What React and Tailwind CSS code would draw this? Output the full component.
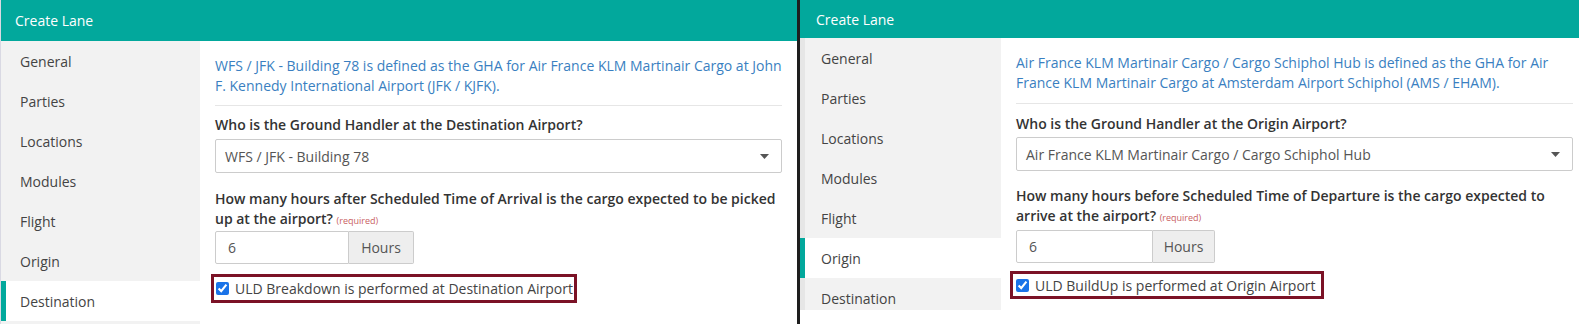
import React from "react";

const teal = "bg-[#02a89c]";

const navItems = ["General", "Parties", "Locations", "Modules", "Flight", "Origin", "Destination"];

const Caret = () => (
  <svg width="9" height="5" viewBox="0 0 9 5" className="shrink-0">
    <path d="M0 0 L9 0 L4.5 5 Z" fill="#555" />
  </svg>
);

const LeftPanel = () => (
  <div className="w-[797px] h-full flex flex-col border-l border-[#d9d9e3] shrink-0">
    <div className={`h-[41px] ${teal} flex items-center pl-[14px] text-white text-[14px]`}>Create Lane</div>
    <div className="flex flex-1">
      <div className="w-[199px] bg-[#f2f2f2] flex flex-col">
        {navItems.map((item) => (
          <div
            key={item}
            className={
              item === "Destination"
                ? "h-[40px] flex items-center pl-[14px] border-l-[5px] border-[#02a89c] bg-white text-[14px] text-[#444]"
                : "h-[40px] flex items-center pl-[19px] text-[14px] text-[#444]"
            }
          >
            {item}
          </div>
        ))}
      </div>
      <div className="flex-1 pt-[15px] pl-[15px] pr-[15px]">
        <p className="text-[14px] leading-[20px] text-[#3a7fc1]">
          WFS / JFK - Building 78 is defined as the GHA for Air France KLM Martinair Cargo at John F. Kennedy
          International Airport (JFK / KJFK).
        </p>
        <div className="mt-[9px] border-t border-[#e6e6e6]" />
        <div className="mt-[9px] text-[14px] leading-[20px] font-semibold text-[#333]">
          Who is the Ground Handler at the Destination Airport?
        </div>
        <div className="mt-[4px] h-[34px] border border-[#ccc] rounded-[2px] pl-[9px] pr-[12px] flex items-center justify-between text-[14px] text-[#555]">
          <span>WFS / JFK - Building 78</span>
          <Caret />
        </div>
        <div className="mt-[16px] text-[14px] leading-[20px] font-semibold text-[#333]">
          How many hours after Scheduled Time of Arrival is the cargo expected to be picked up at the airport?{" "}
          <span className="inline-block text-[9px] leading-[12px] font-normal text-[#c9625f]">(required)</span>
        </div>
        <div className="mt-[2px] flex h-[33px] text-[14px] text-[#555]">
          <div className="w-[134px] border border-[#ccc] rounded-l-[2px] pl-[12px] flex items-center">6</div>
          <div className="w-[65px] border border-l-0 border-[#ccc] rounded-r-[2px] bg-[#eee] flex items-center justify-center">
            Hours
          </div>
        </div>
        <label className="mt-[10px] ml-[-4px] inline-flex items-center h-[29px] border-[3px] border-[#7b1226] pl-[2px] pr-[1px] gap-[6px] text-[14px] text-[#444]">
          <input type="checkbox" checked readOnly className="w-[13px] h-[13px] accent-[#1a73e8]" />
          <span>ULD Breakdown is performed at Destination Airport</span>
        </label>
      </div>
    </div>
  </div>
);

const RightPanel = () => (
  <div className="flex-1 h-full flex flex-col border-l-[3px] border-[#1e1e1e]">
    <div className={`h-[38px] ${teal} flex items-center pl-[16px] text-white text-[14px]`}>Create Lane</div>
    <div className="flex flex-1 items-start">
      <div className="w-[201px] h-[272px] overflow-hidden bg-[#f2f2f2] flex flex-col">
        {navItems.map((item) => (
          <div
            key={item}
            className={
              item === "Origin"
                ? "h-[40px] shrink-0 flex items-center pl-[16px] border-l-[5px] border-[#02a89c] bg-white text-[14px] text-[#444]"
                : "h-[40px] shrink-0 flex items-center pl-[16px] border-l-[5px] border-[#e6e6e6] text-[14px] text-[#444]"
            }
          >
            {item}
          </div>
        ))}
      </div>
      <div className="flex-1 pt-[15px] pl-[15px] pr-[6px]">
        <p className="text-[14px] leading-[20px] text-[#3a7fc1] pr-[8px]">
          Air France KLM Martinair Cargo / Cargo Schiphol Hub is defined as the GHA for Air France KLM Martinair
          Cargo at Amsterdam Airport Schiphol (AMS / EHAM).
        </p>
        <div className="mt-[10px] border-t border-[#e6e6e6]" />
        <div className="mt-[10px] text-[14px] leading-[20px] font-semibold text-[#333]">
          Who is the Ground Handler at the Origin Airport?
        </div>
        <div className="mt-[3px] h-[34px] border border-[#ccc] rounded-[2px] pl-[9px] pr-[12px] flex items-center justify-between text-[14px] text-[#555]">
          <span>Air France KLM Martinair Cargo / Cargo Schiphol Hub</span>
          <Caret />
        </div>
        <div className="mt-[15px] pr-[8px] text-[14px] leading-[20px] font-semibold text-[#333]">
          How many hours before Scheduled Time of Departure is the cargo expected to arrive at the airport?{" "}
          <span className="inline-block text-[9px] leading-[12px] font-normal text-[#c9625f]">(required)</span>
        </div>
        <div className="mt-[4px] flex h-[33px] text-[14px] text-[#555]">
          <div className="w-[137px] border border-[#ccc] rounded-l-[2px] pl-[12px] flex items-center">6</div>
          <div className="w-[62px] border border-l-0 border-[#ccc] rounded-r-[2px] bg-[#eee] flex items-center justify-center">
            Hours
          </div>
        </div>
        <label className="mt-[8px] ml-[-6px] inline-flex items-center h-[28px] border-[3px] border-[#7b1226] pl-[3px] pr-[5px] gap-[6px] text-[14px] text-[#444]">
          <input type="checkbox" checked readOnly className="w-[13px] h-[13px] accent-[#1a73e8]" />
          <span>ULD BuildUp is performed at Origin Airport</span>
        </label>
      </div>
    </div>
  </div>
);

export default function App() {
  return (
    <div className="w-[1579px] h-[324px] flex bg-white overflow-hidden font-['Open_Sans',sans-serif]">
      <LeftPanel />
      <RightPanel />
    </div>
  );
}
